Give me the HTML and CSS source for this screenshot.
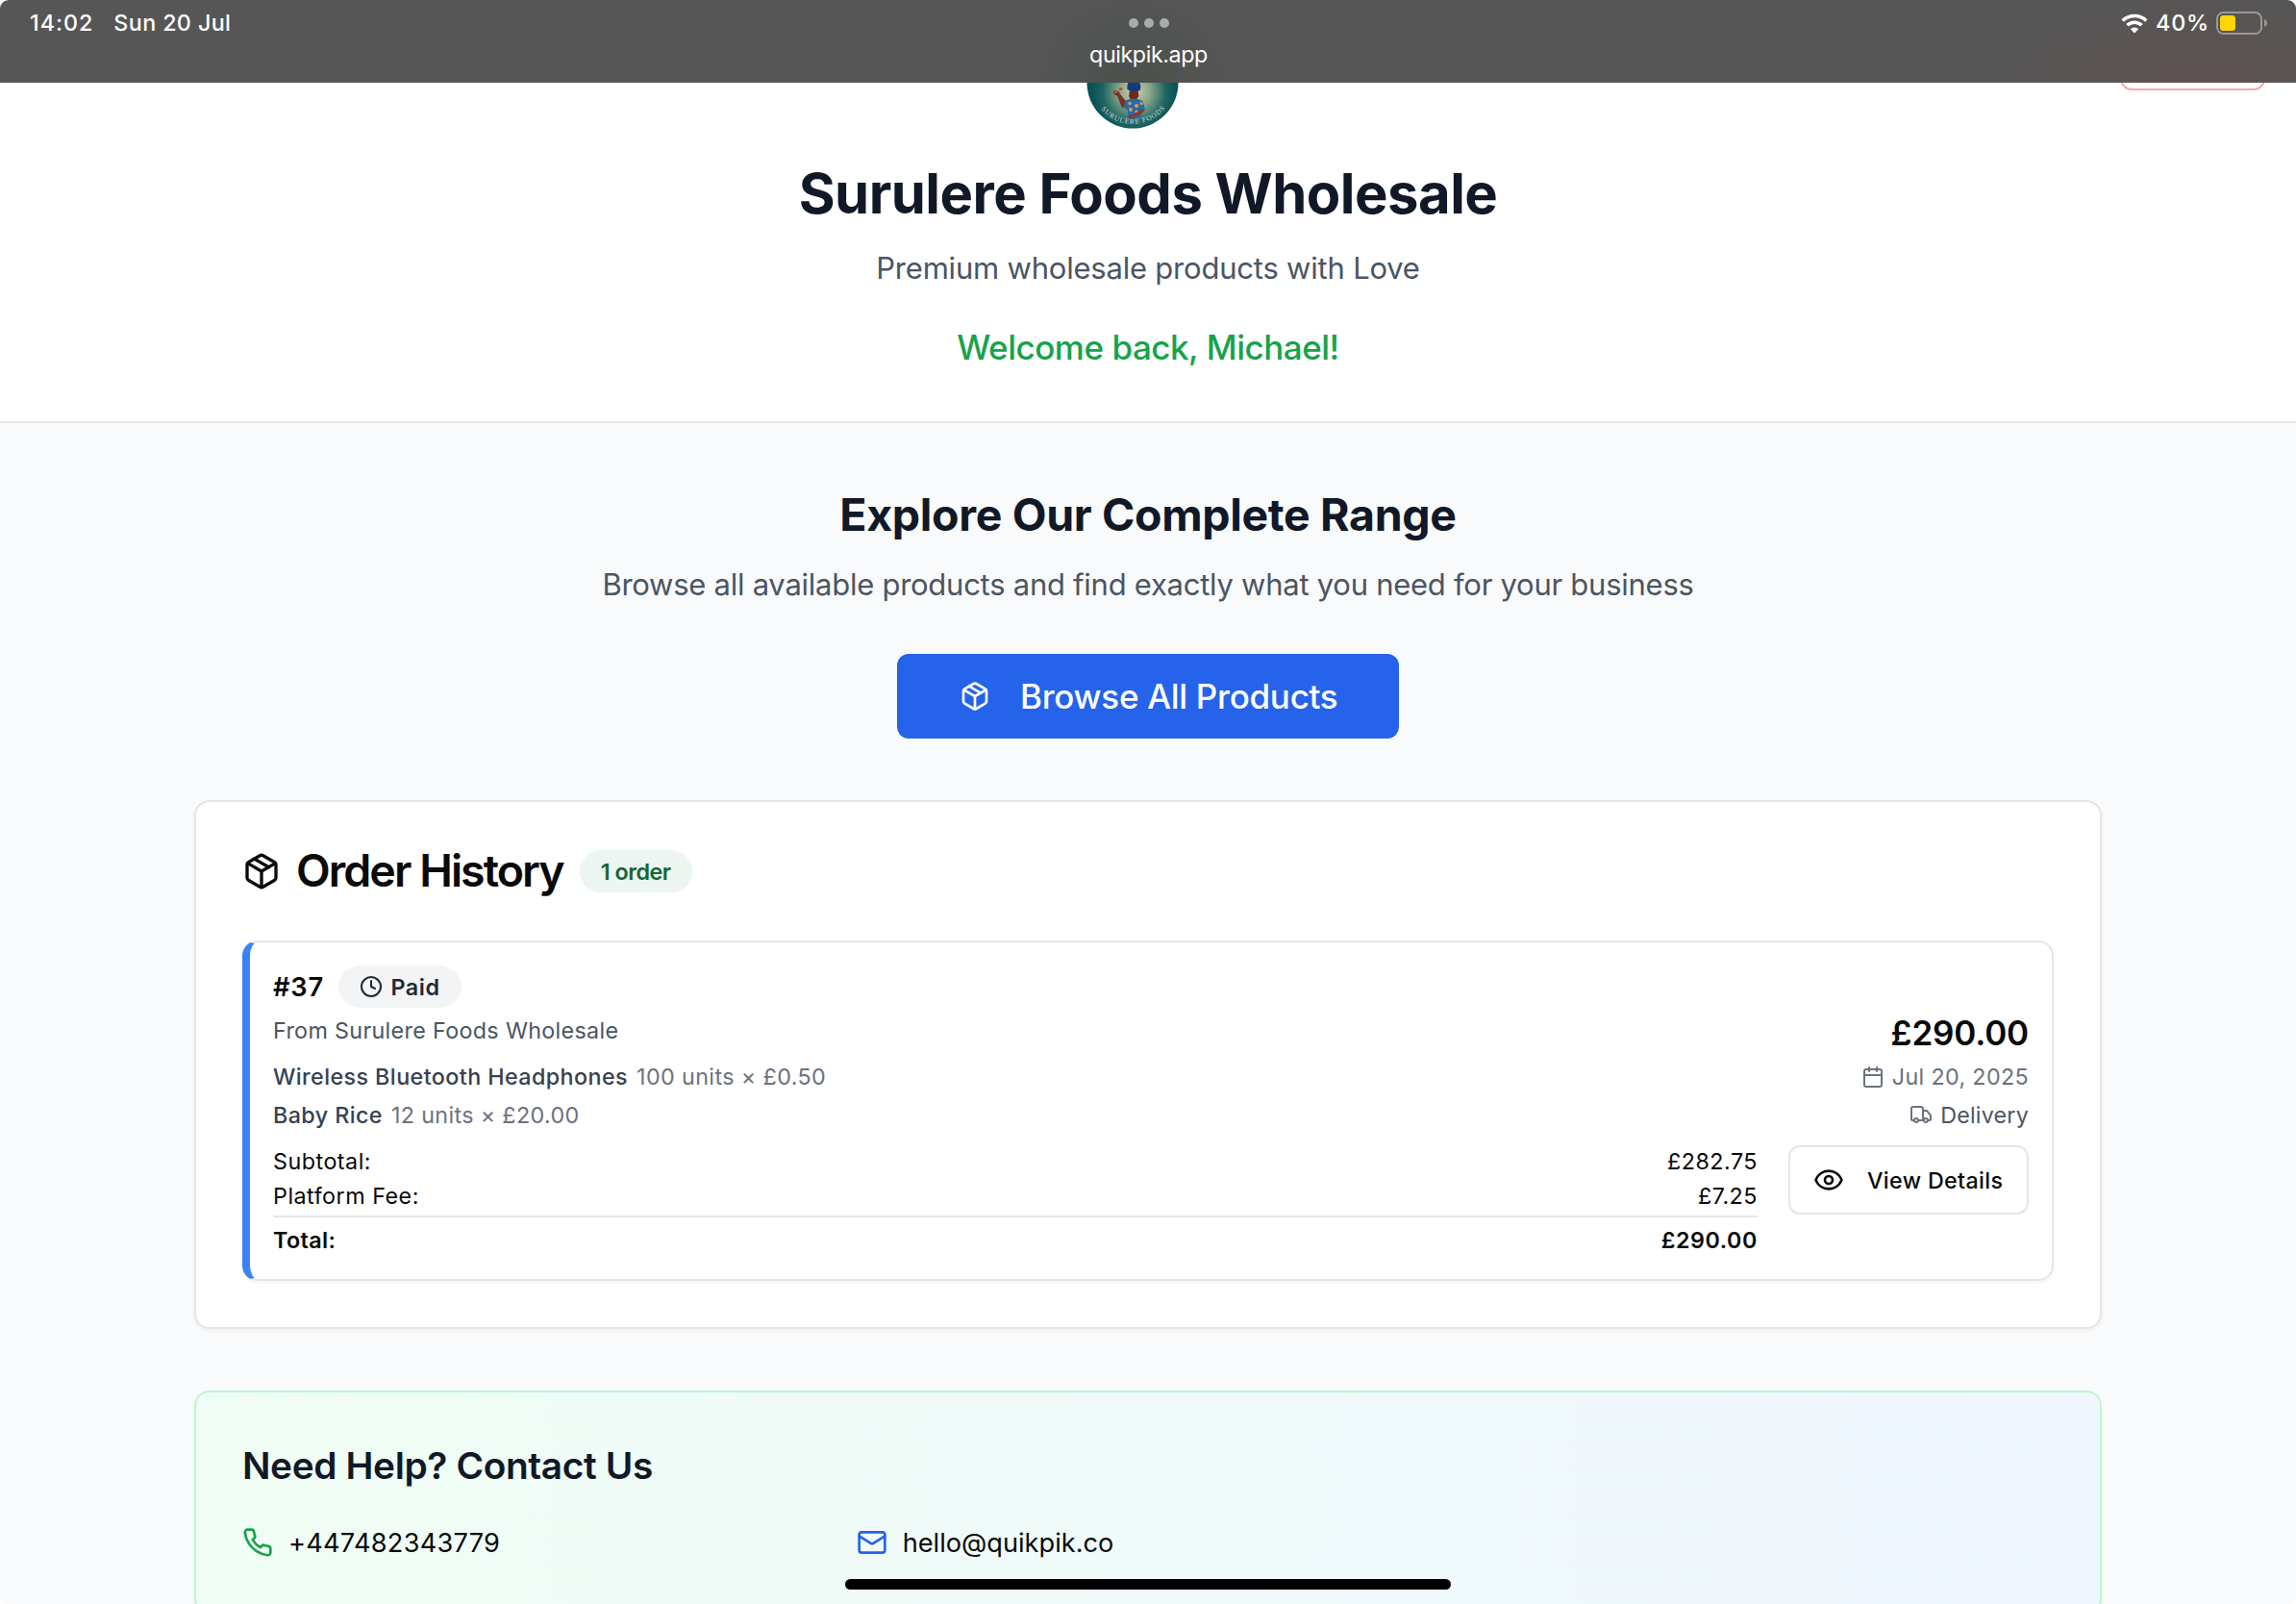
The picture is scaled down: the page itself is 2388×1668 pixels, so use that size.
FILE: index.html
```html
<!DOCTYPE html>
<html lang="en">
<head>
<meta charset="utf-8">
<title>Surulere Foods Wholesale</title>
<link rel="stylesheet" href="styles.css">
</head>
<body>
<svg class="defs" width="0" height="0">
  <symbol id="package" viewBox="0 0 24 24">
    <path d="m7.5 4.27 9 5.15"/>
    <path d="M21 8a2 2 0 0 0-1-1.73l-7-4a2 2 0 0 0-2 0l-7 4A2 2 0 0 0 3 8v8a2 2 0 0 0 1 1.73l7 4a2 2 0 0 0 2 0l7-4A2 2 0 0 0 21 16Z"/>
    <path d="m3.3 7 8.7 5 8.7-5"/>
    <path d="M12 22V12"/>
  </symbol>
</svg>
<div class="screen">
  <div class="statusbar">
    <div class="status-left"><span class="time">14:02</span><span class="date">Sun 20 Jul</span></div>
    <div class="status-center">
      <div class="dots"><i></i><i></i><i></i></div>
      <div class="url">quikpik.app</div>
    </div>
    <div class="status-right">
      <svg class="wifi" width="28" height="21" viewBox="0 0 28 21">
        <path d="M1.7 7.4a17.6 17.6 0 0 1 24.6 0" fill="none" stroke="#fff" stroke-width="3.5"/>
        <path d="M6.5 12.3a10.8 10.8 0 0 1 15 0" fill="none" stroke="#fff" stroke-width="3.5"/>
        <path d="M14 20.5l-4.2-4.3a6.2 6.2 0 0 1 8.4 0z" fill="#fff"/>
      </svg>
      <span class="percent">40%</span>
      <svg class="battery" width="53" height="24" viewBox="0 0 53 24">
        <rect x="1" y="1" width="46" height="22" rx="6.5" fill="none" stroke="#9a9797" stroke-width="2"/>
        <rect x="4" y="4" width="16" height="16" rx="3.5" fill="#ffd60a"/>
        <path d="M50 8c4 1.2 4 6.800 0 8z" fill="#9a9797"/>
      </svg>
    </div>
  </div>

  <header class="store-header">
    <div class="outline-btn"></div>
    <svg class="logo" width="96" height="96" viewBox="0 0 96 96">
      <defs>
        <radialGradient id="glow" cx="52%" cy="60%" r="46%">
          <stop offset="0" stop-color="#d3d5aa"/>
          <stop offset=".35" stop-color="#8fa98a"/>
          <stop offset=".75" stop-color="#1f6664"/>
          <stop offset="1" stop-color="#0c5156"/>
        </radialGradient>
        <path id="arc" d="M15.100 75.600A43 43 0 0 0 83.600 72"/>
      </defs>
      <circle cx="48" cy="48" r="47.500" fill="url(#glow)"/>
      <path d="M45 56h8.500l1 6-3 4v3h-6v-4l-1.500-3z" fill="#6b2a1c"/>
      <path d="M42.500 55c-1-7 3-11 7.500-10.500s7.500 6 6 11c-3 2.500-9.500 2-13.500-.5z" fill="#163a80"/>
      <path d="M42 69l-4.500 4.500-5-12.500-3.500-1.500 0-2.500 4 .5 1.500 3 5 6z" stroke="#7c3120" stroke-width="1.500" fill="#7c3120"/>
      <path d="M29 59l6-4" stroke="#b9784a" stroke-width="1.200"/>
      <ellipse cx="35.800" cy="54.500" rx="2" ry="1.400" fill="#9a5a34"/>
      <path d="M40 67c5-3.500 13-3.500 18.500 0l2.500 9-4 2-1 8H43l0-9-4-3z" fill="#2869a8"/>
      <g fill="#dfa04c"><circle cx="45" cy="69.500" r="1.700"/><circle cx="52" cy="72" r="2"/><circle cx="46" cy="76" r="1.900"/><circle cx="57" cy="69.500" r="1.500"/><circle cx="52" cy="78" r="1.600"/></g>
      <path d="M60.500 76c.5 3-10 8-15 9.500l-2.500-2.500c5-2 9-3.500 12.500-6.500z" fill="#8a3a26"/>
      <text class="logo-text"><textPath href="#arc" textLength="76">SURULERE FOODS</textPath></text>
    </svg>
    <h1>Surulere Foods Wholesale</h1>
    <p class="lead">Premium wholesale products with Love</p>
    <p class="welcome">Welcome back, Michael!</p>
  </header>

  <main>
    <section class="explore">
      <h2>Explore Our Complete Range</h2>
      <p class="lead wide">Browse all available products and find exactly what you need for your business</p>
      <button class="browse"><svg class="icon i32"><use href="#package"/></svg><span>Browse All Products</span></button>
    </section>

    <section class="card">
      <div class="card-title">
        <svg class="icon i40"><use href="#package"/></svg>
        <h3>Order History</h3>
        <span class="badge green">1 order</span>
      </div>
      <article class="order">
        <div class="order-main">
          <div class="order-head">
            <span class="order-id">#37</span>
            <span class="badge gray"><svg class="icon i24" viewBox="0 0 24 24"><circle cx="12" cy="12" r="10"/><path d="M12 6v6l4 2"/></svg><span>Paid</span></span>
          </div>
          <div class="line from">From Surulere Foods Wholesale</div>
          <div class="line item"><b>Wireless Bluetooth Headphones</b><span class="qty">100 units × £0.50</span></div>
          <div class="line item"><b>Baby Rice</b><span class="qty rice">12 units × £20.00</span></div>
          <div class="sums">
            <div class="sum"><span>Subtotal:</span><span>£282.75</span></div>
            <div class="sum"><span>Platform Fee:</span><span>£7.25</span></div>
            <div class="sum total"><span>Total:</span><span class="amount">£290.00</span></div>
          </div>
        </div>
        <div class="order-side">
          <div class="price">£290.00</div>
          <div class="meta when"><svg class="icon i24" viewBox="0 0 24 24"><path d="M8 2v4"/><path d="M16 2v4"/><rect x="3" y="4" width="18" height="18" rx="2"/><path d="M3 10h18"/></svg><span>Jul 20, 2025</span></div>
          <div class="meta how"><svg class="icon i24" viewBox="0 0 24 24"><path d="M14 18V6a2 2 0 0 0-2-2H4a2 2 0 0 0-2 2v11a1 1 0 0 0 1 1h2"/><path d="M15 18H9"/><path d="M19 18h2a1 1 0 0 0 1-1v-3.650a1 1 0 0 0-.22-.624l-3.480-4.350A1 1 0 0 0 17.520 8H14"/><circle cx="17" cy="18" r="2"/><circle cx="7" cy="18" r="2"/></svg><span>Delivery</span></div>
          <button class="details"><svg class="icon i32" viewBox="0 0 24 24"><path d="M2.062 12.348a1 1 0 0 1 0-.696 10.750 10.750 0 0 1 19.876 0 1 1 0 0 1 0 .696 10.750 10.750 0 0 1-19.876 0"/><circle cx="12" cy="12" r="3"/></svg><span>View Details</span></button>
        </div>
      </article>
    </section>

    <section class="card contact">
      <h4>Need Help? Contact Us</h4>
      <div class="contacts">
        <div class="contact-item"><svg class="icon i32 phone" viewBox="0 0 24 24"><path d="M22 16.920v3a2 2 0 0 1-2.180 2 19.790 19.790 0 0 1-8.630-3.070 19.500 19.500 0 0 1-6-6 19.790 19.790 0 0 1-3.070-8.670A2 2 0 0 1 4.110 2h3a2 2 0 0 1 2 1.720 12.840 12.840 0 0 0 .7 2.810 2 2 0 0 1-.45 2.110L8.090 9.910a16 16 0 0 0 6 6l1.270-1.270a2 2 0 0 1 2.110-.45 12.840 12.840 0 0 0 2.810.7A2 2 0 0 1 22 16.920z"/></svg><span class="tel">+447482343779</span></div>
        <div class="contact-item"><svg class="icon i32 mail" viewBox="0 0 24 24"><rect x="2" y="4" width="20" height="16" rx="2"/><path d="m22 7-8.970 5.700a1.940 1.940 0 0 1-2.060 0L2 7"/></svg><span>hello@quikpik.co</span></div>
      </div>
    </section>
  </main>
  <div class="home-bar"></div>
</div>
</body>
</html>
```
FILE: styles.css
```css
* { box-sizing: border-box; margin: 0; padding: 0; }
body {
  background: #fff;
  color: #0a0a0a;
  font-family: Inter, "Liberation Sans", sans-serif;
  font-size: 23.3px;
  overflow: hidden;
}
.defs { position: absolute; }
button { font: inherit; }
.screen {
  position: relative;
  height: 1668px;
  overflow: hidden;
  border-radius: 9px;
  background: #f9fafb;
}
.icon {
  flex: none;
  fill: none;
  stroke: currentColor;
  stroke-width: 2;
  stroke-linecap: round;
  stroke-linejoin: round;
}
.i24 { width: 24px; height: 24px; }
.i32 { width: 32px; height: 32px; }
.i40 { width: 40px; height: 40px; }

/* Browser status bar, over the scrolled page */
.statusbar {
  position: absolute;
  inset: 0 0 auto 0;
  z-index: 2;
  height: 86px;
  display: grid;
  grid-template-columns: 1fr auto 1fr;
  padding: 0 30px 0 31px;
  color: #fff;
  background:
    radial-gradient(ellipse 110px 100px at 1178px 86px, #4b504b 0, rgba(79, 83, 80, .8) 50%, rgba(86, 86, 86, 0) 100%),
    radial-gradient(ellipse 210px 100px at 2285px 86px, #5d5251 0, #5a5453 50%, rgba(86, 86, 86, 0) 100%),
    #565656;
}
.status-left, .status-right { display: flex; align-items: center; height: 48px; font-weight: 500; }
.status-left { gap: 21px; }
.status-left, .percent { line-height: 26px; padding-bottom: 1px; }
.time { letter-spacing: .98px; }
.date { letter-spacing: .38px; }
.status-right { justify-content: flex-end; }
.wifi { margin-right: 8px; }
.percent { letter-spacing: .84px; margin-right: 7px; }
.status-center { display: flex; flex-direction: column; align-items: center; padding-top: 19px; }
.dots { display: flex; gap: 6px; height: 10px; }
.dots i { width: 10px; height: 10px; border-radius: 50%; background: #aaacab; }
.url { margin-top: 12px; line-height: 32px; letter-spacing: -.42px; }

.store-header {
  position: relative;
  height: 440px;
  padding-top: 38px;
  display: flex;
  flex-direction: column;
  align-items: center;
  background: #fff;
  border-bottom: 2px solid #e5e5e5;
}
.outline-btn {
  position: absolute;
  top: 22px;
  right: 32px;
  width: 151px;
  height: 72px;
  border: 2px solid #f9a8a8;
  border-radius: 12px;
}
.logo { margin-right: 32px; }
.logo-text { font-family: "Liberation Serif", serif; font-size: 7.400px; fill: #c4d9d0; }
h1 { margin-top: 31px; font-size: 58px; line-height: 72px; font-weight: 700; letter-spacing: -.53px; color: #111827; }
.lead { margin-top: 18px; font-size: 31px; line-height: 48px; letter-spacing: -.21px; color: #4b5563; }
.explore .wide { margin-top: 17px; letter-spacing: -.26px; }
.welcome { margin-top: 30px; font-size: 35px; line-height: 56px; font-weight: 450; letter-spacing: -.48px; color: #16a34a; }

main { width: 1984px; margin: 0 auto; padding-top: 63px; }
.explore { display: flex; flex-direction: column; align-items: center; }
h2 { font-size: 46.500px; line-height: 64px; font-weight: 700; letter-spacing: -.35px; color: #111827; }
.browse {
  display: flex;
  align-items: center;
  gap: 31px;
  width: 522px;
  height: 88px;
  margin-top: 48px;
  padding: 0 0 1px 65px;
  border: 0;
  border-radius: 12px;
  background: #2563eb;
  color: #fff;
  font-size: 35px;
  font-weight: 450;
  letter-spacing: -.28px;
}

.card {
  margin-top: 64px;
  padding: 48px;
  border: 2px solid #e5e5e5;
  border-radius: 16px;
  background: #fff;
  box-shadow: 0 2px 4px rgba(0, 0, 0, .05);
}
.card-title { display: flex; align-items: center; height: 48px; }
h3 { margin-left: 16px; padding-bottom: 2px; font-size: 46.500px; line-height: 46px; font-weight: 600; letter-spacing: -1.950px; }
.badge {
  display: flex;
  align-items: center;
  justify-content: center;
  height: 44px;
  border-radius: 22px;
  font-weight: 600;
}
.green { width: 117px; margin-left: 17px; background: #ecf5f0; color: #166534; letter-spacing: -.49px; }
.gray { width: 128px; gap: 8px; background: #f3f4f6; color: #1f2937; letter-spacing: .6px; }

.order {
  display: flex;
  gap: 32px;
  height: 354px;
  margin-top: 48px;
  padding: 24px;
  border: 2px solid #e5e5e5;
  border-left: 8px solid #3b82f6;
  border-radius: 16px;
  box-shadow: 0 2px 4px rgba(0, 0, 0, .05);
}
.order-main { flex: 1; }
.order-head { display: flex; align-items: center; gap: 15px; height: 44px; }
.order-id { font-size: 27.200px; font-weight: 600; letter-spacing: .85px; }
.line { display: flex; height: 40px; line-height: 40px; }
.from { margin: 4px 0 8px; color: #4b5563; letter-spacing: .33px; }
.item b { font-weight: 500; color: #374151; letter-spacing: .42px; }
.qty { margin-left: 9px; color: #6b7280; letter-spacing: .39px; }
.rice { letter-spacing: .34px; }
.sums { margin-top: 10px; }
.sum { display: flex; justify-content: space-between; line-height: 36px; letter-spacing: .5px; }
.total { margin-top: 2px; padding-top: 6px; border-top: 2px solid #e5e5e5; font-weight: 600; letter-spacing: .4px; }
.amount { letter-spacing: .57px; }

.order-side { width: 250px; padding-top: 44px; display: flex; flex-direction: column; align-items: flex-end; }
.price { font-size: 35px; line-height: 52px; font-weight: 600; letter-spacing: -.18px; }
.meta { display: flex; align-items: center; gap: 8px; color: #6b7280; }
.when { height: 39px; letter-spacing: .34px; }
.how { height: 40px; letter-spacing: .21px; }
.how span { color: #4b5563; }
.details {
  display: flex;
  align-items: center;
  gap: 24px;
  width: 250px;
  height: 72px;
  margin-top: 12px;
  padding-left: 24px;
  border: 2px solid #e5e5e5;
  border-radius: 12px;
  background: #fff;
  color: #0a0a0a;
  font-weight: 500;
  letter-spacing: .34px;
}

.contact { border-color: #bbf7d0; background: linear-gradient(to right, #f0fdf4, #eff6ff) border-box; }
h4 { font-size: 38.800px; line-height: 56px; font-weight: 600; letter-spacing: -.36px; color: #111827; }
.contacts { display: grid; grid-template-columns: repeat(3, 1fr); gap: 32px; margin-top: 28px; }
.contact-item { display: flex; align-items: center; gap: 16px; height: 48px; font-size: 27.200px; }
.tel { letter-spacing: .25px; }
.phone { color: #16a34a; }
.mail { color: #2563eb; }

.home-bar {
  position: absolute;
  left: 879px;
  bottom: 15px;
  width: 630px;
  height: 11px;
  border-radius: 6px;
  background: #000;
}
```
